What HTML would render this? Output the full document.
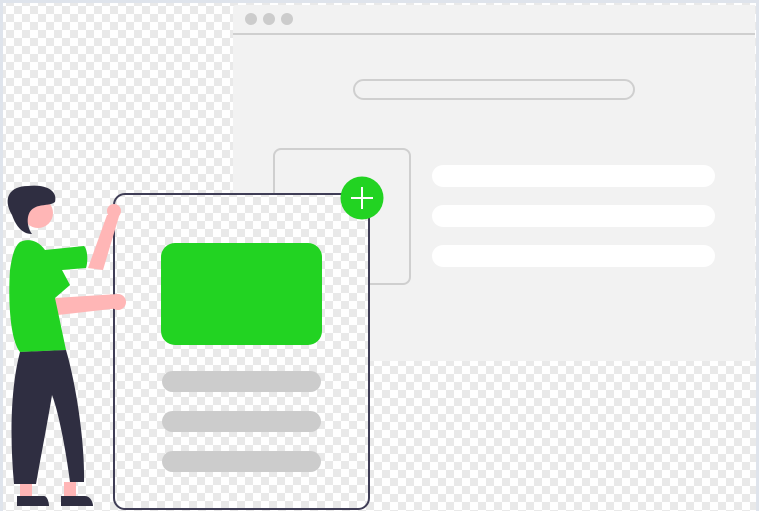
<!DOCTYPE html>
<html><head><style>
*{margin:0;padding:0;box-sizing:border-box}
body{width:759px;height:511px;overflow:hidden;background:#fff;position:relative}
.ck{background-color:#fff;background-image:conic-gradient(#e9e9e9 25%,#fff 0 50%,#e9e9e9 0 75%,#fff 0);background-size:16px 16px}
.bg{position:absolute;left:0;top:0;width:759px;height:511px;border:3px solid #dfe4ec;border-bottom:0;background-position:3px 3px}
.a{position:absolute}
</style></head><body>
<div class="bg ck"></div>
<div class="a" style="left:233px;top:5px;width:522px;height:356px;background:#f2f2f2;border-top-left-radius:3px"></div>
<div class="a" style="left:233px;top:33px;width:522px;height:2px;background:#cfcfcf"></div>
<div class="a" style="left:245px;top:13px;width:12px;height:12px;border-radius:50%;background:#ccc"></div>
<div class="a" style="left:263px;top:13px;width:12px;height:12px;border-radius:50%;background:#ccc"></div>
<div class="a" style="left:281px;top:13px;width:12px;height:12px;border-radius:50%;background:#ccc"></div>
<div class="a" style="left:353px;top:79px;width:282px;height:21px;border-radius:11px;border:2px solid #cfcfcf"></div>
<div class="a" style="left:273px;top:148px;width:138px;height:137px;border-radius:8px;border:2px solid #cfcfcf"></div>
<div class="a" style="left:432px;top:165px;width:283px;height:22px;border-radius:11px;background:#fff"></div>
<div class="a" style="left:432px;top:205px;width:283px;height:22px;border-radius:11px;background:#fff"></div>
<div class="a" style="left:432px;top:245px;width:283px;height:22px;border-radius:11px;background:#fff"></div>
<div class="a ck" style="left:113px;top:193px;width:257px;height:317px;border-radius:12px;border:2px solid #3f3d56;background-position:-110px -190px"></div>
<div class="a" style="left:161px;top:243px;width:161px;height:102px;border-radius:14px;background:#22d322"></div>
<div class="a" style="left:162px;top:371px;width:159px;height:21px;border-radius:11px;background:#ccc"></div>
<div class="a" style="left:162px;top:411px;width:159px;height:21px;border-radius:11px;background:#ccc"></div>
<div class="a" style="left:162px;top:451px;width:159px;height:21px;border-radius:11px;background:#ccc"></div>
<svg class="a" style="left:0;top:0" width="759" height="511">
<circle cx="362" cy="198" r="21.5" fill="#22d322"/>
<path d="M362 187v22M351 198h22" stroke="#fff" stroke-width="2"/>
<path d="M88 268 L107 215 L120 213 L103 270Z" fill="#ffb6b6"/>
<circle cx="114" cy="211" r="7" fill="#ffb6b6"/>
<path d="M55 298 L118 294 L120 308 L58 315Z" fill="#ffb6b6"/>
<circle cx="118" cy="302" r="8" fill="#ffb6b6"/>
<circle cx="38" cy="213" r="15" fill="#ffb6b6"/>
<path d="M12 215 C2 198 10 186 28 186 C45 184 58 190 55 202 C50 206 40 204 34 208 C26 212 26 226 32 234 C22 234 16 226 12 215Z" fill="#2f2e41"/>
<path d="M20 242 C28 238 38 240 45 250 L84 246 C88 250 88 262 86 268 L62 270 L70 285 L55 298 L58 312 L66 350 L20 352 C10 340 8 300 10 270 C12 255 15 246 20 242Z" fill="#22d322"/>
<path d="M20 352 L66 350 C75 380 85 440 84 482 L70 482 C66 450 58 410 52 395 C48 420 42 450 36 484 L14 484 C10 440 10 390 20 352Z" fill="#2f2e41"/>
<rect x="20" y="484" width="12" height="12" fill="#ffb6b6"/>
<rect x="64" y="482" width="12" height="14" fill="#ffb6b6"/>
<path d="M17 496 h27 c3 0 5 6 5 10 h-32z" fill="#2f2e41"/>
<path d="M61 496 h24 c5 0 8 6 8 10 h-32z" fill="#2f2e41"/>
</svg>
</body></html>
